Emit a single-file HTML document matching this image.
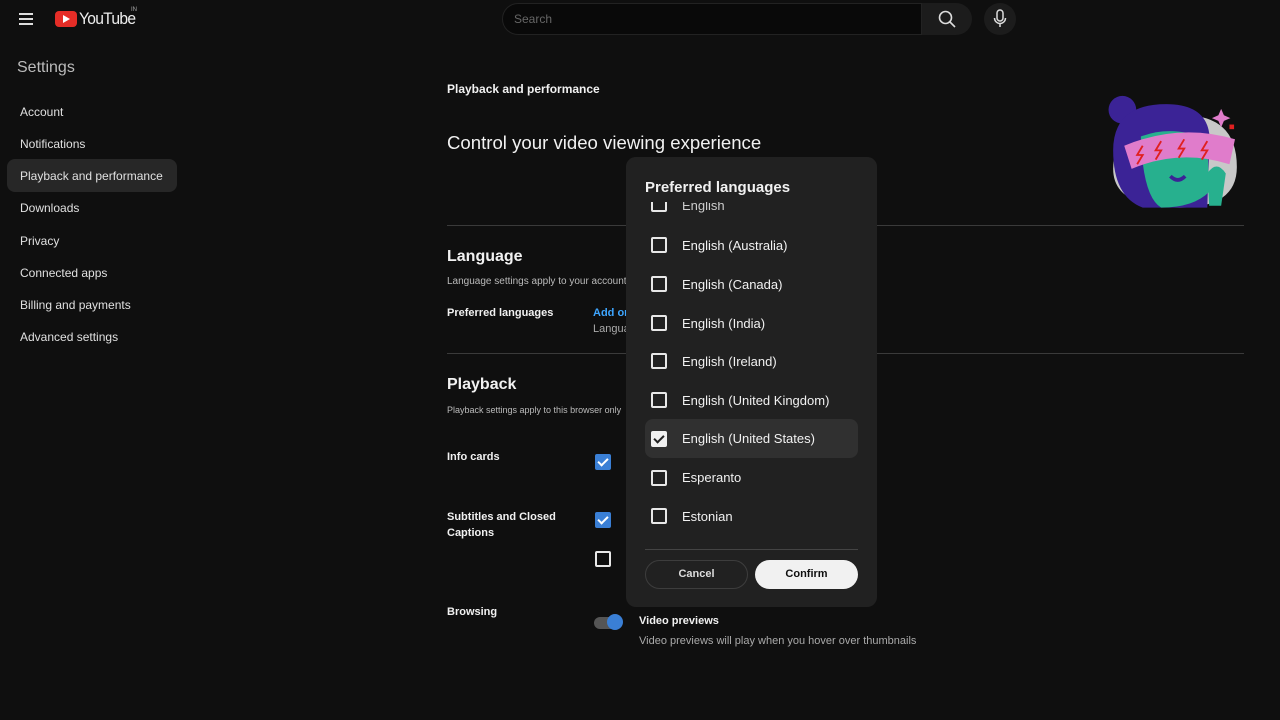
<!DOCTYPE html>
<html><head><meta charset="utf-8"><style>
*{margin:0;padding:0;box-sizing:border-box}
body{width:1280px;height:720px;background:#0f0f0f;color:#f1f1f1;font-family:"Liberation Sans",Roboto,sans-serif;position:relative;overflow:hidden}
.a{position:absolute}
.nav div{position:absolute;left:20px;font-size:12px;color:#e0e0e0}
.cb{position:absolute;width:16px;height:16px;border:2px solid #e8e8e8;border-radius:2px}
.cbb{position:absolute;width:16px;height:16px;background:#3a7fd5;border-radius:2px}
.cbb:after,.ck:after{content:"";position:absolute;left:5px;top:2px;width:4px;height:8px;border:solid #fff;border-width:0 2px 2px 0;transform:rotate(45deg)}
.ck{position:absolute;width:16px;height:16px;background:#f1f1f1;border-radius:2px}
.ck:after{border-color:#222}
.li{position:absolute;left:682px;font-size:13px;color:#f1f1f1}
.line{position:absolute;height:1px;background:#3a3a3a}
.b{font-weight:600}
</style></head><body>
<div class="a" style="left:19px;top:13px;width:14px;height:2px;background:#ddd;box-shadow:0 5px 0 #ddd,0 10px 0 #ddd"></div>
<div class="a" style="left:55px;top:11px;width:22px;height:16px;background:#e52d27;border-radius:4px"></div>
<div class="a" style="left:63px;top:15px;width:0;height:0;border-left:7px solid #fff;border-top:4px solid transparent;border-bottom:4px solid transparent"></div>
<div class="a" style="left:79px;top:9px;font-size:17px;letter-spacing:-0.8px;color:#eee;transform:scaleX(.92);transform-origin:left">YouTube</div>
<div class="a" style="left:131px;top:7px;font-size:6px;color:#aaa">IN</div>
<div class="a" style="left:502px;top:3px;width:420px;height:32px;border:1px solid #222;border-radius:16px 0 0 16px;background:#090909"></div>
<div class="a" style="left:514px;top:12px;font-size:12px;color:#666">Search</div>
<div class="a" style="left:922px;top:3px;width:50px;height:32px;background:#1c1c1c;border-radius:0 16px 16px 0"></div>
<svg class="a" style="left:937px;top:9px" width="20" height="20" viewBox="0 0 20 20"><circle cx="8.5" cy="8.5" r="6" fill="none" stroke="#ddd" stroke-width="1.6"/><path d="M13 13l5 5" stroke="#ddd" stroke-width="1.6"/></svg>
<div class="a" style="left:984px;top:3px;width:32px;height:32px;border-radius:50%;background:#1c1c1c"></div>
<svg class="a" style="left:992px;top:9px" width="16" height="20" viewBox="0 0 16 20"><rect x="5" y="1" width="6" height="11" rx="3" fill="none" stroke="#ddd" stroke-width="1.5"/><path d="M2.5 9a5.5 5.5 0 0011 0M8 14.5V18" fill="none" stroke="#ddd" stroke-width="1.5"/></svg>
<div class="a" style="left:17px;top:59px;font-size:16px;color:#bbb">Settings</div>
<div class="a" style="left:7px;top:159px;width:170px;height:33px;background:#272727;border-radius:8px"></div>
<div class="nav"><div style="top:105px">Account</div><div style="top:137px">Notifications</div><div style="top:169px">Playback and performance</div><div style="top:201px">Downloads</div><div style="top:234px">Privacy</div><div style="top:266px">Connected apps</div><div style="top:298px">Billing and payments</div><div style="top:330px">Advanced settings</div></div>
<div class="a b" style="left:447px;top:82px;font-size:12px">Playback and performance</div>
<div class="a" style="left:447px;top:132px;font-size:18.6px">Control your video viewing experience</div>
<svg class="a" style="left:1105px;top:95px" width="140" height="120" viewBox="0 0 150 130">
<path d="M8 80 Q8 25 80 22 Q142 20 142 78 Q142 122 80 122 Q8 122 8 80Z" fill="#c8c8c8"/>
<circle cx="18" cy="16" r="15" fill="#3b2396"/>
<path d="M8 60 Q8 8 70 10 Q118 12 112 60 L110 122 L40 122 Q8 110 8 60Z" fill="#3b2396"/>
<path d="M38 45 Q72 32 110 48 L112 105 Q95 122 60 122 Q40 110 38 45Z" fill="#27b08e"/>
<path d="M20 55 Q80 30 140 48 L134 75 Q80 58 28 80Z" fill="#e07ccb"/>
<path d="M40 55l-6 10 6 0-6 10M60 50l-6 10 6 0-6 10M85 48l-6 10 6 0-6 10M110 50l-6 10 6 0-6 10" stroke="#e02020" stroke-width="2" fill="none"/>
<path d="M70 88 q8 8 16 0" stroke="#3b2396" stroke-width="4" fill="none"/>
<path d="M112 120 L110 85 Q120 70 130 85 L125 120Z" fill="#27b08e"/>
<path d="M125 15 l3 7 7 3 -7 3 -3 7 -3 -7 -7 -3 7 -3z" fill="#e07ccb"/>
<rect x="134" y="32" width="5" height="5" fill="#e02020"/>
</svg>
<div class="line" style="left:447px;top:225px;width:797px"></div>
<div class="a b" style="left:447px;top:248px;font-size:16px">Language</div>
<div class="a" style="left:447px;top:276px;font-size:10px;color:#bbb">Language settings apply to your account</div>
<div class="a b" style="left:447px;top:307px;font-size:11px">Preferred languages</div>
<div class="a b" style="left:593px;top:307px;font-size:11px;color:#3ea6ff">Add or</div>
<div class="a" style="left:593px;top:323px;font-size:11px;color:#aaa">Langua</div>
<div class="line" style="left:447px;top:353px;width:797px"></div>
<div class="a b" style="left:447px;top:376px;font-size:16px">Playback</div>
<div class="a" style="left:447px;top:405px;font-size:9px;color:#bbb">Playback settings apply to this browser only</div>
<div class="a b" style="left:447px;top:451px;font-size:11px">Info cards</div>
<div class="cbb" style="left:595px;top:454px"></div>
<div class="a b" style="left:447px;top:509px;font-size:11px;line-height:16px">Subtitles and Closed<br>Captions</div>
<div class="cbb" style="left:595px;top:512px"></div>
<div class="cb" style="left:595px;top:551px"></div>
<div class="a b" style="left:447px;top:606px;font-size:11px">Browsing</div>
<div class="a" style="left:594px;top:617px;width:26px;height:12px;border-radius:6px;background:#555"></div>
<div class="a" style="left:607px;top:614px;width:16px;height:16px;border-radius:50%;background:#3a7fd5"></div>
<div class="a b" style="left:639px;top:615px;font-size:11px">Video previews</div>
<div class="a" style="left:639px;top:635px;font-size:11px;color:#aaa">Video previews will play when you hover over thumbnails</div>
<div class="a" style="left:626px;top:157px;width:251px;height:450px;background:#212121;border-radius:10px;overflow:hidden">
<div class="a" style="left:0;top:40px;width:251px;height:352px;overflow:hidden">
<div class="cb" style="left:25px;top:-1px"></div><div class="li" style="left:56px;top:1px;color:#ccc">English</div>
</div>
</div>
<div class="a" style="left:626px;top:157px;width:251px;height:45px;background:#212121;border-radius:10px 10px 0 0"></div>
<div class="a b" style="left:645px;top:179px;font-size:15px">Preferred languages</div>
<div class="a" style="left:645px;top:419px;width:213px;height:39px;background:#303030;border-radius:8px"></div>
<div class="cb" style="left:651px;top:237px"></div><div class="li" style="top:238px">English (Australia)</div>
<div class="cb" style="left:651px;top:276px"></div><div class="li" style="top:277px">English (Canada)</div>
<div class="cb" style="left:651px;top:315px"></div><div class="li" style="top:316px">English (India)</div>
<div class="cb" style="left:651px;top:353px"></div><div class="li" style="top:354px">English (Ireland)</div>
<div class="cb" style="left:651px;top:392px"></div><div class="li" style="top:393px">English (United Kingdom)</div>
<div class="ck" style="left:651px;top:431px"></div><div class="li" style="top:431px">English (United States)</div>
<div class="cb" style="left:651px;top:470px"></div><div class="li" style="top:470px">Esperanto</div>
<div class="cb" style="left:651px;top:508px"></div><div class="li" style="top:509px">Estonian</div>
<div class="line" style="left:645px;top:549px;width:213px;background:#444"></div>
<div class="a b" style="left:645px;top:560px;width:103px;height:29px;border:1px solid #3d3d3d;border-radius:15px;font-size:11px;text-align:center;line-height:27px;color:#ddd">Cancel</div>
<div class="a b" style="left:755px;top:560px;width:103px;height:29px;background:#f1f1f1;border-radius:15px;font-size:11px;text-align:center;line-height:29px;color:#0f0f0f">Confirm</div>
</body></html>
